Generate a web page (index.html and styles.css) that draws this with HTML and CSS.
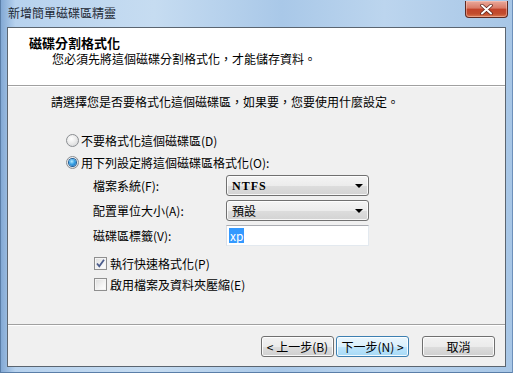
FILE: index.html
```html
<!DOCTYPE html>
<html lang="zh-Hant">
<head>
    <meta charset="UTF-8">
    <title>新增簡單磁碟區精靈</title>
    <link rel="stylesheet" href="styles.css">
</head>
<body>
    <div class="window">
        <div class="titlebar">
            <span class="title">新增簡單磁碟區精靈</span>
            <button class="close" type="button">
                <svg width="13" height="11" viewBox="0 0 13 11">
                    <path d="M2 1.5 L11 9.5 M11 1.5 L2 9.5" stroke="#5a2018" stroke-width="3.4" stroke-linecap="round"/>
                    <path d="M2 1.5 L11 9.5 M11 1.5 L2 9.5" stroke="#ffffff" stroke-width="2" stroke-linecap="round"/>
                </svg>
            </button>
        </div>

        <div class="client">
            <div class="wizard-header">
                <div class="wizard-title">磁碟分割格式化</div>
                <div class="wizard-subtitle">您必須先將這個磁碟分割格式化，才能儲存資料。</div>
            </div>

            <div class="wizard-body">
                <p class="intro">請選擇您是否要格式化這個磁碟區，如果要，您要使用什麼設定。</p>

                <div class="options">
                    <label class="option">
                        <span class="radio"></span>
                        不要格式化這個磁碟區(D)
                    </label>
                    <label class="option">
                        <span class="radio checked"></span>
                        用下列設定將這個磁碟區格式化(O):
                    </label>

                    <div class="settings">
                        <div class="setting">
                            <span class="setting-label">檔案系統(F):</span>
                            <div class="combo"><span class="combo-text latin">NTFS</span><span class="arrow"></span></div>
                        </div>
                        <div class="setting">
                            <span class="setting-label">配置單位大小(A):</span>
                            <div class="combo"><span class="combo-text">預設</span><span class="arrow"></span></div>
                        </div>
                        <div class="setting">
                            <span class="setting-label">磁碟區標籤(V):</span>
                            <div class="textbox"><span class="selected">xp</span></div>
                        </div>
                    </div>

                    <div class="checks">
                        <label class="option check-row">
                            <span class="checkbox checked">
                                <svg width="11" height="11" viewBox="0 0 11 11">
                                    <path d="M2 5.5 L4.3 8.3 L9 1.8" fill="none" stroke="#4b5c8c" stroke-width="1.8"/>
                                </svg>
                            </span>
                            執行快速格式化(P)
                        </label>
                        <label class="option check-row">
                            <span class="checkbox"></span>
                            啟用檔案及資料夾壓縮(E)
                        </label>
                    </div>
                </div>
            </div>

            <div class="wizard-footer">
                <button class="btn" type="button">&lt; 上一步(B)</button>
                <button class="btn default" type="button">下一步(N) &gt;</button>
                <button class="btn cancel" type="button">取消</button>
            </div>
        </div>
    </div>
</body>
</html>
```

FILE: styles.css
```css
body {
    margin: 0;
    padding: 0;
    width: 513px;
    height: 373px;
    overflow: hidden;
    font-family: "Noto Sans CJK TC", "Noto Sans", sans-serif;
    font-size: 12px;
    color: #000;
}
.window {
    width: 513px;
    height: 373px;
    box-sizing: border-box;
    padding: 0 7px 6px 7px;
    display: flex;
    flex-direction: column;
    background: linear-gradient(to right, #7fa6d3 0%, #b7d2ee 3%, #c6dcf1 30%, #a9c8e8 55%, #bcd5ee 75%, #a7c6e6 100%);
    box-shadow: inset 1px 0 0 #5a7ea8, inset -1px 0 0 #6d90ba, inset 0 -1px 0 #5a7ea8;
}
.titlebar {
    height: 27px;
    display: flex;
    align-items: flex-start;
    margin: 0 -7px;
    padding-left: 8px;
}
.title {
    line-height: 16px;
    margin-top: 5px;
    color: #1e2a36;
}
.close {
    margin-left: auto;
    margin-right: 5px;
    margin-top: 1px;
    width: 43px;
    height: 17px;
    padding: 0;
    border: 1px solid #5e2a22;
    border-top: none;
    border-radius: 0 0 4px 4px;
    background: linear-gradient(#e9a99c 0%, #d97a66 45%, #c2432a 50%, #c24d2e 80%, #dc7a52 100%);
    box-shadow: inset 0 0 0 1px rgba(255, 210, 200, 0.45);
    display: flex;
    align-items: center;
    justify-content: center;
}
.client {
    flex: 1;
    display: flex;
    flex-direction: column;
    border: 1px solid #5b6570;
    background-color: #f0f0f0;
}
.wizard-header {
    height: 58px;
    box-sizing: border-box;
    padding: 7px 0 0 21px;
    background-color: #fff;
    border-bottom: 1px solid #a0a0a0;
}
.wizard-title {
    font-weight: bold;
    font-size: 13px;
    line-height: 16px;
}
.wizard-subtitle {
    line-height: 16px;
    padding-left: 23px;
}
.wizard-body {
    flex: 1;
    border-top: 1px solid #fff;
    border-bottom: 1px solid #a0a0a0;
    padding: 7px 0 0 43px;
}
.intro {
    margin: 0;
    line-height: 16px;
}
.options {
    margin-top: 20px;
    padding-left: 15px;
}
.option {
    height: 20px;
    display: flex;
    align-items: center;
    gap: 2px;
}
.option + .option {
    margin-top: 2px;
}
.radio {
    width: 11px;
    height: 11px;
    border-radius: 50%;
    border: 1px solid #8b8e92;
    background: radial-gradient(circle at 40% 35%, #ffffff 0%, #eeeeee 40%, #cfd1d3 100%);
    display: flex;
    align-items: center;
    justify-content: center;
}
.radio.checked::after {
    content: "";
    width: 7px;
    height: 7px;
    border-radius: 50%;
    background: radial-gradient(circle at 40% 35%, #b6ebff 0%, #3aa3e6 45%, #0d5fb0 100%);
    box-shadow: 0 0 0 1px #1e5c96;
}
.settings {
    margin-top: 3px;
    padding-left: 27px;
    display: flex;
    flex-direction: column;
    gap: 4px;
}
.setting {
    display: flex;
    align-items: center;
    height: 21px;
}
.setting-label {
    width: 133px;
}
.combo {
    width: 143px;
    height: 21px;
    box-sizing: border-box;
    border: 1px solid #707070;
    border-radius: 3px;
    background: linear-gradient(#f4f4f4 0%, #ececec 50%, #dddddd 51%, #d3d3d3 100%);
    box-shadow: inset 0 0 0 1px rgba(255, 255, 255, 0.8);
    display: flex;
    align-items: center;
    padding: 0 5px 0 5px;
}
.combo-text {
    flex: 1;
    line-height: 16px;
}
.latin {
    font-family: "Liberation Serif", serif;
    font-weight: bold;
    font-size: 12px;
    letter-spacing: 1px;
}
.arrow {
    width: 0;
    height: 0;
    border-left: 4px solid transparent;
    border-right: 4px solid transparent;
    border-top: 4px solid #000;
}
.textbox {
    width: 143px;
    height: 21px;
    box-sizing: border-box;
    border: 1px solid #e3e9ef;
    border-top-color: #abadb3;
    border-left-color: #dbdfe6;
    background-color: #fff;
    display: flex;
    align-items: center;
    padding-left: 2px;
}
.selected {
    background-color: #3399ff;
    color: #fff;
    line-height: 15px;
    padding: 0 1px;
}
.checks {
    margin-top: 7px;
    padding-left: 28px;
}
.check-row {
    gap: 3px;
}
.check-row + .check-row {
    margin-top: 1px;
}
.checkbox {
    width: 11px;
    height: 11px;
    border: 1px solid #8f8f8f;
    background: linear-gradient(135deg, #dcdcdc 0%, #f4f4f4 60%, #ffffff 100%);
    box-shadow: inset 0 0 0 1px #f4f4f4;
    display: flex;
    align-items: center;
    justify-content: center;
}
.wizard-footer {
    height: 41px;
    box-sizing: border-box;
    border-top: 1px solid #fff;
    padding: 10px 10px 0 0;
    display: flex;
    justify-content: flex-end;
    align-items: flex-start;
    gap: 2px;
}
.btn {
    width: 73px;
    height: 21px;
    padding: 0;
    font-family: "Noto Sans CJK TC", "Noto Sans", sans-serif;
    font-size: 12px;
    line-height: 16px;
    color: #000;
    border: 1px solid #707070;
    border-radius: 3px;
    background: linear-gradient(#f2f2f2 0%, #ebebeb 50%, #dddddd 51%, #cfcfcf 100%);
    box-shadow: inset 0 0 0 1px rgba(255, 255, 255, 0.85);
}
.btn.default {
    border-color: #3c7fb1;
    background: linear-gradient(#eaf6fd 0%, #d9f0fc 50%, #bee6fd 51%, #a7d9f5 100%);
}
.btn.cancel {
    margin-left: 11px;
}
```
